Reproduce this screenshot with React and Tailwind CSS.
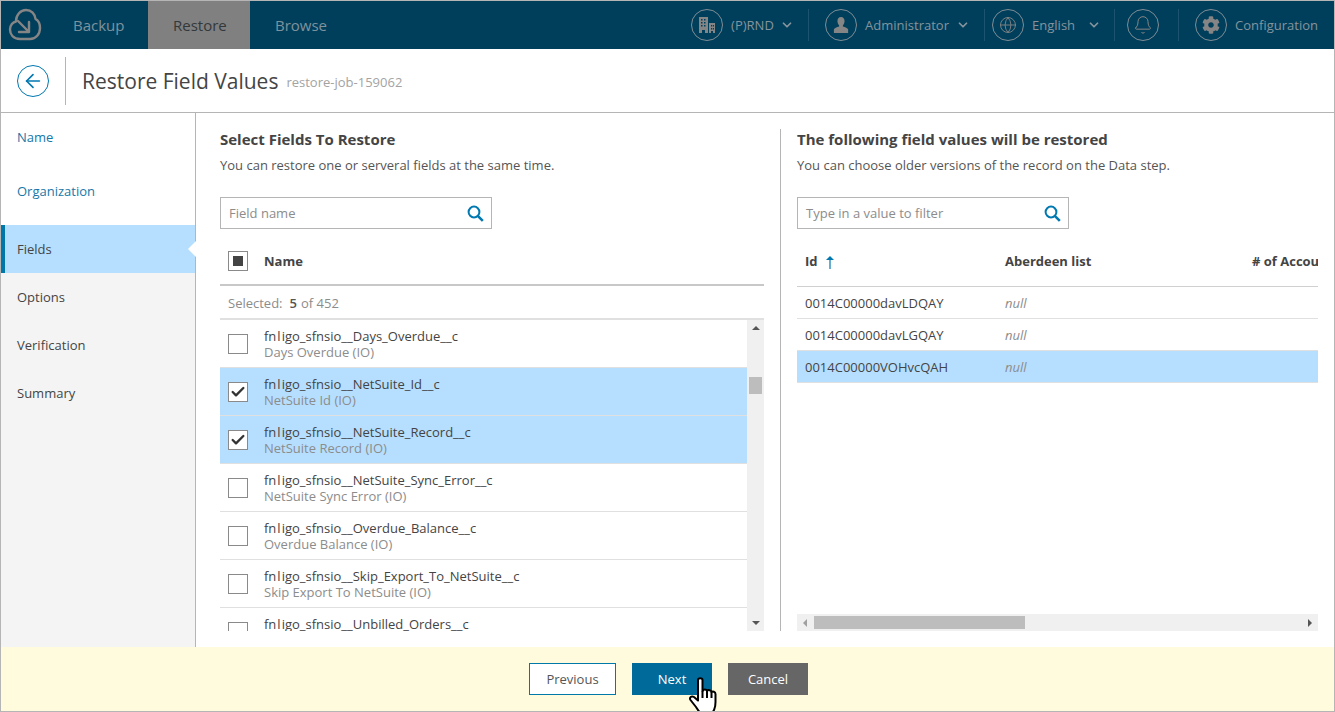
import { ArrowLeft, Bell, Check, ChevronDown, Globe } from 'lucide-react'
import { FaCog } from 'react-icons/fa'

const fields = [
  { api: 'fnligo_sfnsio__Days_Overdue__c', label: 'Days Overdue (IO)' },
  { api: 'fnligo_sfnsio__NetSuite_Id__c', label: 'NetSuite Id (IO)', on: true },
  { api: 'fnligo_sfnsio__NetSuite_Record__c', label: 'NetSuite Record (IO)', on: true },
  { api: 'fnligo_sfnsio__NetSuite_Sync_Error__c', label: 'NetSuite Sync Error (IO)' },
  { api: 'fnligo_sfnsio__Overdue_Balance__c', label: 'Overdue Balance (IO)' },
  { api: 'fnligo_sfnsio__Skip_Export_To_NetSuite__c', label: 'Skip Export To NetSuite (IO)' },
  { api: 'fnligo_sfnsio__Unbilled_Orders__c', label: 'Unbilled Orders (IO)' },
]

const records = [
  { id: '0014C00000davLDQAY' },
  { id: '0014C00000davLGQAY' },
  { id: '0014C00000VOHvcQAH', on: true },
]

function Logo() {
  return (
    <svg width="34" height="34" viewBox="0 0 34 34" fill="none" stroke="#858585" strokeWidth="2.4" strokeLinecap="round" strokeLinejoin="round">
      <path d="M12 31 C5 31 2 26 2 21.5 C2 17 5 14 8 13.5 C8 7 12.5 2 18 2 C23.5 2 27 6 27.5 11 C30.5 12.5 32 16 32 20 C32 26 28 31 22 31 Z" />
      <path d="M10 13 L21 24 M21 14 V24 H11" />
    </svg>
  )
}

function Circle({ children }) {
  return <div className="w-[32px] h-[32px] rounded-full border border-[#7f8c94] flex items-center justify-center shrink-0">{children}</div>
}

function Divider({ className }) {
  return <div className={`w-px h-[32px] bg-[#1c5470] ${className}`}></div>
}

function CheckBox({ on }) {
  return (
    <div className="w-[20px] h-[20px] border border-[#8a8a8a] bg-white flex items-center justify-center shrink-0">
      {on && <Check className="w-[16px] h-[16px] text-[#333]" strokeWidth={3.5} />}
    </div>
  )
}

function SearchBox({ placeholder }) {
  return (
    <div className="w-[272px] h-[32px] border border-[#b5b5b5] flex items-center justify-between pl-[8px] pr-[7px]">
      <span className="pt-[2px] text-[13px] text-[#8c8c8c]">{placeholder}</span>
      <svg width="17" height="17" viewBox="0 0 17 17" fill="none" stroke="#0078b0">
        <circle cx="7" cy="7" r="5.4" strokeWidth="2" />
        <path d="M10.8 10.800 L15.800 15.800" strokeWidth="2.6" />
      </svg>
    </div>
  )
}

function Step({ label, className }) {
  return (
    <div className={`h-[48px] pl-[16px] pt-[2px] flex items-center text-[13px] ${className}`}>{label}</div>
  )
}

export default function App() {
  return (
    <div className="relative w-[1335px] h-[712px] border border-[#b5b5b5] flex flex-col overflow-hidden bg-white font-['Open_Sans',sans-serif]">
      <div className="h-[48px] bg-[#003f5c] flex items-center shrink-0">
        <div className="w-[47px] pl-[7px] flex items-center"><Logo /></div>
        <div className="h-full w-[100px] flex items-center pl-[25px] text-[15px] text-[#7f929c]">Backup</div>
        <div className="h-full w-[102px] flex items-center pl-[25px] text-[15px] text-[#33383b] bg-[#808080]">Restore</div>
        <div className="h-full flex items-center pl-[25px] text-[15px] text-[#7f929c]">Browse</div>

        <div className="ml-auto flex items-center text-[13px] text-[#85949c]">
          <Circle>
            <svg width="18" height="18" viewBox="0 0 18 18" fill="#858585">
              <path d="M1 1h9v16H7v-3H4v3H1z M11 7h6v10h-2v-2h-2v2h-2z" />
              <path fill="#003f5c" d="M3 3h1.5v1.5H3z M6 3h1.5v1.5H6z M3 6h1.5v1.5H3z M6 6h1.5v1.5H6z M3 9h1.5v1.5H3z M6 9h1.5v1.5H6z M13 9h1.3v1.5H13z M15 9h1v1.5h-1z M13 12h1.3v1.5H13z M15 12h1v1.5h-1z" />
            </svg>
          </Circle>
          <span className="ml-[8px] pt-[2px] w-[45px]">(P)RND</span>
          <ChevronDown className="ml-[4px] w-[14px] h-[14px] text-[#85949c]" strokeWidth={3} />
          <Divider className="ml-[14px] mr-[16px]" />
          <Circle>
            <svg width="16" height="18" viewBox="0 0 18 20" fill="#858585">
              <path d="M9 1c2.6 0 4 2 4 4.6 0 2-.8 3.8-1.9 4.9v1.3c2.7.8 5.4 1.7 5.9 3.2V19H1v-4c.5-1.500 3.200-2.400 5.900-3.200v-1.300C5.800 9.400 5 7.600 5 5.600 5 3 6.400 1 9 1z" />
            </svg>
          </Circle>
          <span className="ml-[8px] pt-[2px] w-[84px]">Administrator</span>
          <ChevronDown className="ml-[7px] w-[14px] h-[14px] text-[#85949c]" strokeWidth={3} />
          <Divider className="ml-[14px] mr-[7px]" />
          <Circle><Globe className="w-[18px] h-[18px] text-[#858585]" strokeWidth={1.2} /></Circle>
          <span className="ml-[8px] pt-[2px] w-[55px]">English</span>
          <ChevronDown className="w-[14px] h-[14px] text-[#85949c]" strokeWidth={3} />
          <Divider className="ml-[13px] mr-[12px]" />
          <Circle><Bell className="w-[20px] h-[20px] text-[#858585]" strokeWidth={1.2} /></Circle>
          <Divider className="ml-[19px] mr-[16px]" />
          <Circle><FaCog className="w-[18px] h-[18px] text-[#858585]" /></Circle>
          <span className="ml-[8px] pt-[2px] mr-[16px]">Configuration</span>
        </div>
      </div>

      <div className="h-[64px] border-b border-[#b5b5b5] flex items-center shrink-0">
        <div className="w-[65px] h-[48px] border-r border-[#b5b5b5] pl-[16px] flex items-center">
          <div className="w-[32px] h-[32px] rounded-full border border-[#0078b0] flex items-center justify-center">
            <ArrowLeft className="w-[22px] h-[22px] text-[#0078b0]" strokeWidth={1.8} />
          </div>
        </div>
        <h1 className="ml-[16px] pt-[2px] text-[21px] text-[#444]">Restore Field Values</h1>
        <span className="ml-[8px] mt-[4px] text-[13px] text-[#a3a3a3]">restore-job-159062</span>
      </div>

      <div className="flex-1 flex min-h-0">
        <div className="w-[195px] border-r border-[#b5b5b5] shrink-0 flex flex-col bg-[#f4f4f4] relative">
          <div className="bg-white h-[112px]">
            <Step label="Name" className="text-[#1578a8]" />
            <Step label="Organization" className="text-[#1578a8] mt-[6px]" />
          </div>
          <Step label="Fields" className="text-[#444] bg-[#b6dfff] border-l-4 border-[#0077a8] !pl-[12px]" />
          <Step label="Options" className="text-[#444]" />
          <Step label="Verification" className="text-[#444]" />
          <Step label="Summary" className="text-[#444]" />
          <div className="absolute right-[-1px] top-[128px] w-0 h-0 border-y-[8px] border-y-transparent border-r-[8px] border-r-white"></div>
        </div>

        <div className="flex-1 flex pl-[24px] pt-[16px] min-w-0">
          <div className="w-[544px] shrink-0 flex flex-col h-[502px]">
            <h2 className="h-[21px] leading-[21px] text-[15px] font-bold text-[#444]">Select Fields To Restore</h2>
            <p className="mt-[6px] h-[18px] leading-[18px] text-[13px] text-[#555]">You can restore one or serveral fields at the same time.</p>
            <div className="mt-[23px]"><SearchBox placeholder="Field name" /></div>
            <div className="h-[57px] pt-[9px] border-b-2 border-[#c8c8c8] flex items-center pl-[8px] gap-[16px] shrink-0">
              <div className="w-[20px] h-[20px] border border-[#8a8a8a] flex items-center justify-center">
                <div className="w-[10px] h-[10px] bg-[#444]"></div>
              </div>
              <span className="pt-[2px] text-[13px] font-bold text-[#444]">Name</span>
            </div>
            <div className="h-[34px] pt-[4px] border-b-2 border-[#e0e0e0] flex items-center pl-[8px] text-[13px] text-[#8c8c8c] shrink-0">
              Selected:<span className="ml-[7px] font-semibold text-[#555]">5</span><span className="ml-[4px]">of 452</span>
            </div>
            <div className="flex-1 flex min-h-0">
              <div className="flex-1 overflow-hidden">
                {fields.map((f) => (
                  <div key={f.api} className={`h-[48px] flex items-center pl-[8px] gap-[16px] border-b border-[#e0e0e0] ${f.on ? 'bg-[#b6dfff]' : ''}`}>
                    <CheckBox on={f.on} />
                    <div className="text-[13px] leading-[16px]">
                      <div className="text-[#444]"><span className="mr-[1px]">{f.api.slice(0, 2)}</span><span className="mr-[1px]">{f.api.slice(2, 3)}</span>{f.api.slice(3)}</div>
                      <div className="text-[#8c8c8c]">{f.label}</div>
                    </div>
                  </div>
                ))}
              </div>
              <div className="w-[17px] bg-[#f0f0f0] relative shrink-0">
                <div className="absolute left-[5px] top-[6px] w-0 h-0 border-x-[4px] border-x-transparent border-b-[4px] border-b-[#555]"></div>
                <div className="absolute left-[2px] top-[57px] w-[13px] h-[17px] bg-[#bdbdbd]"></div>
                <div className="absolute left-[5px] bottom-[6px] w-0 h-0 border-x-[4px] border-x-transparent border-t-[4px] border-t-[#555]"></div>
              </div>
            </div>
          </div>

          <div className="w-px h-[502px] bg-[#b5b5b5] ml-[16px] shrink-0"></div>

          <div className="w-[521px] ml-[16px] shrink-0 flex flex-col h-[502px]">
            <h2 className="h-[21px] leading-[21px] text-[15px] font-bold text-[#444]">The following field values will be restored</h2>
            <p className="mt-[6px] h-[18px] leading-[18px] text-[13px] text-[#555]">You can choose older versions of the record on the Data step.</p>
            <div className="mt-[23px]"><SearchBox placeholder="Type in a value to filter" /></div>
            <div className="h-[58px] pt-[9px] border-b border-[#d0d0d0] flex items-center text-[13px] font-bold text-[#444] overflow-hidden whitespace-nowrap shrink-0">
              <div className="w-[208px] pl-[8px] flex items-center gap-[8px] shrink-0">
                Id
                <svg width="8" height="13" viewBox="0 0 8 13" fill="#0078b0">
                  <path d="M4 0 L8 4 H4.600 V13 H3.400 V4 H0 Z" />
                </svg>
              </div>
              <div className="w-[247px] shrink-0">Aberdeen list</div>
              <div className="shrink-0"># of Accounts</div>
            </div>
            {records.map((r) => (
              <div key={r.id} className={`h-[32px] pt-[2px] flex items-center border-b border-[#e0e0e0] text-[13px] shrink-0 ${r.on ? 'bg-[#b6dfff]' : ''}`}>
                <div className="w-[208px] pl-[8px] text-[#444] shrink-0">{r.id}</div>
                <div className="italic text-[#8c8c8c]">null</div>
              </div>
            ))}
            <div className="mt-auto h-[17px] bg-[#f0f0f0] flex items-center relative shrink-0">
              <div className="absolute left-[6px] top-[5px] w-0 h-0 border-y-[4px] border-y-transparent border-r-[4px] border-r-[#a0a0a0]"></div>
              <div className="absolute left-[17px] top-[2px] w-[211px] h-[13px] bg-[#bdbdbd]"></div>
              <div className="absolute right-[6px] top-[5px] w-0 h-0 border-y-[4px] border-y-transparent border-l-[4px] border-l-[#555]"></div>
            </div>
          </div>
        </div>
      </div>

      <div className="h-[64px] bg-[#fffbdc] flex items-start justify-center pt-[16px] pl-[2px] gap-[16px] shrink-0 text-[13px]">
        <button className="w-[87px] h-[32px] pt-[2px] bg-white border border-[#0078a8] text-[#555]">Previous</button>
        <button className="w-[80px] h-[32px] pt-[2px] bg-[#006b9a] text-white">Next</button>
        <button className="w-[80px] h-[32px] pt-[2px] bg-[#666] text-white">Cancel</button>
      </div>

      <svg className="absolute left-[687px] top-[675px]" width="30" height="37" viewBox="0 0 30 37" fill="white" stroke="black" strokeWidth="2" strokeLinejoin="round">
        <path d="M10 4 C10 1.500 14.500 1.500 14.500 4 V15 C15.500 13 18.500 13 19 15 C20 13.500 23 14 23.500 16 C24.500 15 27.500 15.500 27.500 18 V26 C27.500 31 26 37 22 37 H14 C11 37 10 34 8 31 L2.500 24 C1 21.500 3.500 19.500 6 21 L10 24.500 Z" />
        <path d="M14.500 15v7 M19 15v7 M23.500 16v6" fill="none" strokeWidth="2" />
      </svg>
    </div>
  )
}
